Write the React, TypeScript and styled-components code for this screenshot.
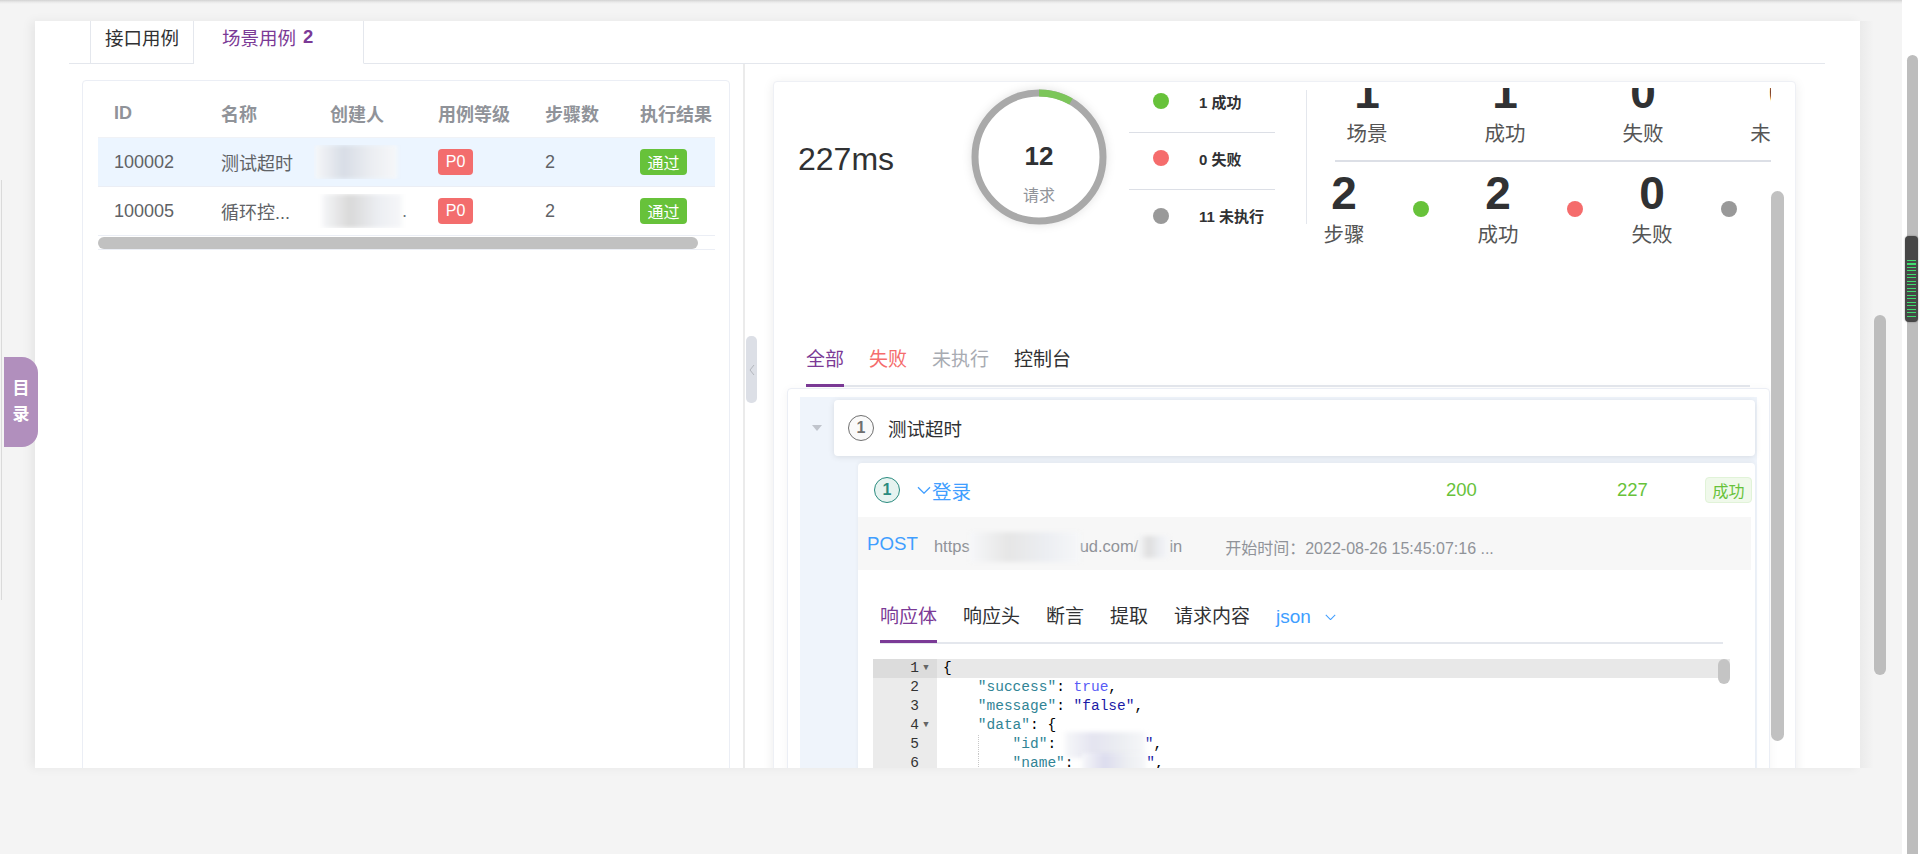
import React from 'react';
import styled, { createGlobalStyle } from 'styled-components';

const FONT = `"Liberation Sans", "Noto Sans CJK SC", sans-serif`;
const MONO = `"Liberation Mono", "DejaVu Sans Mono", monospace`;

const PURPLE = '#7b3a96';
const BLUE = '#409eff';
const GREEN = '#67c23a';
const RED = '#f56c6c';

const GlobalStyle = createGlobalStyle`
  html, body { margin: 0; padding: 0; }
  body { font-family: ${FONT}; background: #f4f4f4; overflow: hidden; }
  * { box-sizing: border-box; }
`;

const Page = styled.div`
  position: relative;
  width: 1920px;
  height: 854px;
  display: flex;
  overflow: hidden;
  background: #f4f4f4;
  font-family: ${FONT};
`;

const MainColumn = styled.div`
  flex: 1;
  min-width: 0;
  display: flex;
  flex-direction: column;
`;

const TopShade = styled.div`
  height: 21px;
  flex-shrink: 0;
  background: linear-gradient(#d2d2d2, #e9e9e9 2px, #f4f4f4 4px);
`;

const Body = styled.div`
  display: flex;
  height: 747px;
  flex-shrink: 0;
`;

const LeftGutter = styled.div`
  width: 35px;
  flex-shrink: 0;
  display: flex;
  flex-direction: column;
`;

const EdgeLine = styled.div`
  width: 1px;
  height: 420px;
  margin: 159px 0 0 1px;
  background: #dadada;
`;

const TocTab = styled.div`
  position: absolute;
  left: 4px;
  top: 357px;
  width: 34px;
  height: 90px;
  border-radius: 0 16px 16px 0;
  background: #b18fbd;
  color: #fff;
  font-size: 17px;
  font-weight: 700;
  display: flex;
  flex-direction: column;
  align-items: center;
  justify-content: center;
  gap: 6px;
  line-height: 20px;
  z-index: 2;
`;

const MainPanel = styled.div`
  width: 1825px;
  flex-shrink: 0;
  background: #fff;
  display: flex;
  flex-direction: column;
  overflow: hidden;
  box-shadow: -4px 0 10px rgba(0, 0, 0, 0.06);
`;

const RightGutter = styled.div`
  flex: 1;
  display: flex;
  padding-left: 14px;
  background: linear-gradient(to right, #ebebeb, #f4f4f4 14px);
`;

const GutterThumb = styled.div`
  width: 12px;
  height: 360px;
  margin-top: 294px;
  border-radius: 6px;
  background: #bdbdbd;
`;

const PageScrollbar = styled.div`
  position: relative;
  width: 18px;
  flex-shrink: 0;
  background: #fff;
  display: flex;
  flex-direction: column;
`;

const PageThumb = styled.div`
  flex: 1;
  margin: 55px 2px 0 5px;
  border-radius: 6px 6px 0 0;
  background: #bdbdbd;
`;

const MiniHandle = styled.div`
  position: absolute;
  left: 3px;
  top: 236px;
  width: 13px;
  height: 86px;
  border-radius: 4px;
  background: #474747;
  box-shadow: 0 0 2px rgba(0, 0, 0, 0.4);
  padding: 24px 2px 3px;
`;

const MiniLines = styled.div`
  height: 100%;
  background: repeating-linear-gradient(to bottom, #3fdc6e 0 1px, transparent 1px 3.5px);
`;

/* ---------- case tabs ---------- */

const CaseTabs = styled.div`
  display: flex;
  height: 43px;
  margin: 0 35px 0 34px;
  padding-left: 21px;
  border-bottom: 1px solid #e4e7ed;
  flex-shrink: 0;
`;

const CaseTab = styled.div<{ $active?: boolean }>`
  display: flex;
  align-items: center;
  height: 43px;
  padding: ${p => (p.$active ? '0 50px 11px 28px' : '0 14px 11px')};
  border-left: ${p => (p.$active ? 'none' : '1px solid #e4e7ed')};
  border-right: 1px solid #e4e7ed;
  border-bottom: 1px solid ${p => (p.$active ? '#fff' : '#e4e7ed')};
  background: #fff;
  font-size: 18.5px;
  color: ${p => (p.$active ? PURPLE : '#303133')};
  white-space: nowrap;
`;

const TabCount = styled.b`
  margin-left: 7px;
  font-size: 18.5px;
`;

const Split = styled.div`
  display: flex;
  flex: 1;
  min-height: 0;
  margin-left: 34px;
`;

/* ---------- left table ---------- */

const LeftPane = styled.div`
  width: 674px;
  flex-shrink: 0;
  padding: 16px 13px 0;
`;

const LeftCard = styled.div`
  height: 720px;
  border: 1px solid #ebeef5;
  border-radius: 4px;
  padding: 8px 14px 0 15px;
`;

const TableViewport = styled.div`
  overflow: hidden;
`;

const TableGrid = styled.div`
  width: 635px;
`;

const COLS = '107px 109px 108px 107px 95px 109px';

const HeaderRow = styled.div`
  display: grid;
  grid-template-columns: ${COLS};
  height: 49px;
  align-items: center;
  border-bottom: 1px solid #f0f2f6;
  font-size: 18px;
  font-weight: 700;
  color: #909399;
`;

const DataRow = styled.div<{ $hl?: boolean }>`
  display: grid;
  grid-template-columns: ${COLS};
  height: 49px;
  align-items: center;
  border-bottom: 1px solid #ebeef5;
  background: ${p => (p.$hl ? '#ecf5ff' : '#fff')};
  font-size: 18px;
  color: #606266;
`;

const Cell = styled.div<{ $pad?: number }>`
  padding-left: ${p => p.$pad ?? 16}px;
  white-space: nowrap;
  overflow: hidden;
  display: flex;
  align-items: center;
`;

const Tag = styled.span<{ $color: string; $w: number }>`
  display: inline-flex;
  align-items: center;
  justify-content: center;
  width: ${p => p.$w}px;
  height: 26px;
  border-radius: 4px;
  background: ${p => p.$color};
  color: #fff;
  font-size: 16px;
`;

const BlurPatch = styled.span<{ $w: number; $h: number; $tone: string }>`
  display: inline-block;
  width: ${p => p.$w}px;
  height: ${p => p.$h}px;
  background: linear-gradient(90deg, #f6f7f9, ${p => p.$tone} 35%, #eceef2 70%, #f6f7f9);
  filter: blur(2px);
  flex-shrink: 0;
`;

const TableScroll = styled.div`
  height: 14px;
  padding-top: 1px;
  border-bottom: 1px solid #ebeef5;
`;

const TableThumb = styled.div`
  width: 600px;
  height: 12px;
  border-radius: 6px;
  background: #c1c1c1;
`;

/* ---------- divider ---------- */

const Divider = styled.div`
  width: 2px;
  flex-shrink: 0;
  background: #ebebeb;
`;

const HandleColumn = styled.div`
  width: 13px;
  flex-shrink: 0;
  padding: 272px 0 0 1px;
`;

const CollapseHandle = styled.div`
  width: 11px;
  height: 67px;
  border-radius: 5px;
  background: #dcdfe6;
  display: flex;
  align-items: center;
  justify-content: center;
`;

/* ---------- right result card ---------- */

const RightPane = styled.div`
  flex: 1;
  min-width: 0;
  padding: 17px 64px 0 15px;
`;

const ResultCard = styled.div`
  display: flex;
  height: 720px;
  background: #fff;
  border: 1px solid #eef0f5;
  border-radius: 4px;
  box-shadow: 0 2px 12px rgba(0, 0, 0, 0.08);
`;

const CardMain = styled.div`
  flex: 1;
  min-width: 0;
  display: flex;
  flex-direction: column;
`;

const CardScroll = styled.div`
  width: 13px;
  margin-right: 11px;
  flex-shrink: 0;
`;

const CardThumb = styled.div`
  height: 550px;
  margin-top: 109px;
  border-radius: 7px;
  background: #c1c1c1;
`;

const SummaryRow = styled.div`
  display: flex;
  align-items: flex-start;
  height: 176px;
  padding-left: 24px;
  flex-shrink: 0;
`;

const TimeValue = styled.div`
  width: 173px;
  margin-top: 57px;
  font-size: 32px;
  line-height: 40px;
  color: #303133;
`;

const DonutWrap = styled.div`
  position: relative;
  width: 136px;
  height: 136px;
  margin-top: 7px;
  flex-shrink: 0;
`;

const DonutSvg = styled.svg`
  position: absolute;
  inset: 0;
  filter: drop-shadow(0 0 5px rgba(0, 0, 0, 0.12));
`;

const DonutLabel = styled.div`
  position: relative;
  display: flex;
  flex-direction: column;
  align-items: center;
  padding-top: 52px;
`;

const DonutCount = styled.div`
  font-size: 26px;
  line-height: 30px;
  font-weight: 700;
  color: #303133;
`;

const DonutCaption = styled.div`
  margin-top: 14px;
  font-size: 16px;
  line-height: 22px;
  color: #909399;
`;

const Legend = styled.div`
  width: 146px;
  margin: -6px 0 0 22px;
  flex-shrink: 0;
`;

const LegendRow = styled.div`
  display: flex;
  align-items: center;
  height: 57px;
  padding: 15px 0 21px 24px;
  border-bottom: 1px solid #dcdfe6;

  &:last-child {
    border-bottom: none;
  }
`;

const Dot = styled.span<{ $color: string }>`
  display: inline-block;
  width: 16px;
  height: 16px;
  border-radius: 50%;
  background: ${p => p.$color};
  flex-shrink: 0;
`;

const LegendText = styled.span`
  margin-left: 30px;
  font-size: 15px;
  font-weight: 700;
  color: #303133;
  white-space: nowrap;
`;

const VSeparator = styled.div`
  width: 1px;
  height: 134px;
  margin: 8px 0 0 31px;
  background: #e4e7ed;
  flex-shrink: 0;
`;

const StatsViewport = styled.div`
  flex: 1;
  min-width: 0;
  height: 163px;
  margin-top: 6px;
  overflow: hidden;
`;

const StatsInner = styled.div`
  margin-top: -21px;
  width: 700px;
`;

const StatsTopRow = styled.div`
  display: flex;
  gap: 18px;
`;

const StatCol = styled.div<{ $w: number }>`
  width: ${p => p.$w}px;
  flex-shrink: 0;
  display: flex;
  flex-direction: column;
  align-items: center;
`;

const StatNumber = styled.div`
  font-size: 46px;
  line-height: 50px;
  font-weight: 700;
  color: #303133;
`;

const StatLabel = styled.div`
  margin-top: 3px;
  font-size: 20.5px;
  line-height: 28px;
  color: #555;
  white-space: nowrap;
`;

const StatsRule = styled.div`
  height: 2px;
  margin: 12px 0 0 28px;
  background: #dcdfe6;
`;

const StatsBottomRow = styled.div`
  display: flex;
  margin-top: 6px;
`;

const DotCol = styled.div`
  width: 80px;
  flex-shrink: 0;
  display: flex;
  align-items: center;
  justify-content: center;
`;

const TabsBar = styled.div`
  display: flex;
  gap: 25px;
  margin: 89px 21px 0 32px;
  border-bottom: 2px solid #e4e7ed;
  flex-shrink: 0;
`;

const TabItem = styled.div<{ $color: string; $active?: boolean }>`
  font-size: 19px;
  line-height: 26px;
  padding-bottom: ${p => (p.$active ? '10px' : '12px')};
  color: ${p => p.$color};
  border-bottom: ${p => (p.$active ? `3px solid ${PURPLE}` : 'none')};
  margin-bottom: ${p => (p.$active ? '-2px' : '0')};
  white-space: nowrap;
`;

const ResultBox = styled.div`
  flex: 1;
  display: flex;
  flex-direction: column;
  margin: 1px 1px 0 13px;
  padding: 8px 12px 0;
  border: 1px solid #ebeef5;
  border-radius: 4px;
  box-shadow: 0 2px 10px rgba(0, 0, 0, 0.05);
`;

const TreeArea = styled.div`
  flex: 1;
  display: flex;
  flex-direction: column;
  background: #eff4fb;
`;

const NodeRow = styled.div`
  display: flex;
  padding: 3px 2px 3px 0;
`;

const CaretCol = styled.div`
  width: 34px;
  display: flex;
  align-items: center;
  justify-content: center;
`;

const NodeCard = styled.div`
  flex: 1;
  height: 56px;
  display: flex;
  align-items: center;
  padding-left: 14px;
  background: #fff;
  border-radius: 4px;
  box-shadow: 0 1px 6px rgba(0, 0, 0, 0.1);
`;

const IndexCircle = styled.span<{ $color: string; $bg: string }>`
  display: inline-flex;
  align-items: center;
  justify-content: center;
  width: 26px;
  height: 26px;
  border-radius: 50%;
  border: 1.5px solid ${p => p.$color};
  background: ${p => p.$bg};
  color: ${p => p.$color};
  font-size: 16px;
  font-weight: 700;
  flex-shrink: 0;
`;

const NodeName = styled.span`
  margin-left: 14px;
  font-size: 18.5px;
  color: #303133;
`;

const Children = styled.div`
  flex: 1;
  display: flex;
  flex-direction: column;
  padding: 4px 2px 0 58px;
`;

const StepCard = styled.div`
  flex: 1;
  display: flex;
  flex-direction: column;
  background: #fff;
  border-radius: 4px 4px 0 0;
  box-shadow: 0 -1px 4px rgba(0, 0, 0, 0.05);
`;

const StepHeader = styled.div`
  display: flex;
  align-items: center;
  height: 54px;
  padding: 0 3px 0 16px;
`;

const StepName = styled.div`
  flex: 1;
  display: flex;
  align-items: center;
  gap: 1px;
  margin-left: 17px;
  font-size: 19.5px;
  color: ${BLUE};
`;

const StepMetric = styled.div<{ $w: number }>`
  width: ${p => p.$w}px;
  font-size: 18.5px;
  color: ${GREEN};
`;

const StatusTag = styled.span`
  display: inline-flex;
  align-items: center;
  justify-content: center;
  width: 47px;
  height: 26px;
  border-radius: 4px;
  background: #f0f9eb;
  border: 1px solid #e1f3d8;
  color: ${GREEN};
  font-size: 16px;
`;

const RequestRow = styled.div`
  display: flex;
  align-items: center;
  height: 53px;
  margin-right: 4px;
  padding-left: 9px;
  background: #f7f7f7;
`;

const Method = styled.span`
  font-size: 18.7px;
  color: ${BLUE};
`;

const UrlText = styled.span`
  display: flex;
  align-items: center;
  margin: 6px 0 0 16px;
  font-size: 16.5px;
  color: #909399;
  white-space: nowrap;
`;

const StartTime = styled.span`
  margin: 6px 0 0 43px;
  font-size: 16px;
  color: #909399;
  white-space: nowrap;
`;

const ResponseTabs = styled.div`
  display: flex;
  align-items: flex-start;
  gap: 26px;
  margin: 34px 32px 0 22px;
  border-bottom: 2px solid #e4e7ed;
`;

const DropTab = styled.div`
  display: flex;
  align-items: center;
  gap: 14px;
  height: 26px;
  font-size: 19px;
  color: ${BLUE};
`;

const Editor = styled.div`
  position: relative;
  flex: 1;
  margin: 15px 25px 0 15px;
  overflow: hidden;
  font-family: ${MONO};
  font-size: 14.5px;
  line-height: 19px;
  color: #000;
`;

const EditorLine = styled.div<{ $active?: boolean }>`
  display: flex;
  height: 19px;
  background: ${p => (p.$active ? '#e8e8e8' : '#fff')};
`;

const GutterCell = styled.div<{ $active?: boolean }>`
  width: 64px;
  flex-shrink: 0;
  display: flex;
  justify-content: flex-end;
  padding-right: 4px;
  background: ${p => (p.$active ? '#dcdcdc' : '#ebebeb')};
  color: #333;
`;

const FoldMark = styled.span`
  width: 14px;
  text-align: center;
  font-size: 9px;
  color: #666;
`;

const CodeCell = styled.div`
  padding-left: 6px;
  white-space: pre;
  display: flex;
  align-items: center;
`;

const Indent = styled.span<{ $guide?: boolean }>`
  display: inline-block;
  width: 34.8px;
  height: 19px;
  flex-shrink: 0;
  border-left: ${p => (p.$guide ? '1px dotted #c8c8c8' : 'none')};
`;

const Key = styled.span`
  color: #318495;
`;

const Bool = styled.span`
  color: #585cf6;
`;

const Str = styled.span`
  color: #1a1aa6;
`;

const EditorThumb = styled.div`
  position: absolute;
  top: 0;
  right: 0;
  width: 12px;
  height: 25px;
  border-radius: 6px;
  background: #c4c4c4;
`;

const Chevron: React.FC<{ color: string; w?: number }> = ({ color, w = 14 }) => (
  <svg width={w} height={w * 0.6} viewBox="0 0 14 8" fill="none">
    <polyline points="1,1 7,7 13,1" stroke={color} strokeWidth="1.3" />
  </svg>
);

const rows = [
  { id: '100002', name: '测试超时', hl: true, tone: '#d8dde6', dot: false },
  { id: '100005', name: '循环控...', hl: false, tone: '#d9d9d9', dot: true },
];

const App: React.FC = () => {
  return (
    <Page>
      <GlobalStyle />
      <MainColumn>
        <TopShade />
        <Body>
          <LeftGutter>
            <EdgeLine />
          </LeftGutter>
          <MainPanel>
            <CaseTabs>
              <CaseTab>接口用例</CaseTab>
              <CaseTab $active>
                场景用例<TabCount>2</TabCount>
              </CaseTab>
            </CaseTabs>
            <Split>
              <LeftPane>
                <LeftCard>
                  <TableViewport>
                    <TableGrid>
                      <HeaderRow>
                        <Cell>ID</Cell>
                        <Cell>名称</Cell>
                        <Cell>创建人</Cell>
                        <Cell>用例等级</Cell>
                        <Cell>步骤数</Cell>
                        <Cell>执行结果</Cell>
                      </HeaderRow>
                      {rows.map(r => (
                        <DataRow key={r.id} $hl={r.hl}>
                          <Cell>{r.id}</Cell>
                          <Cell>{r.name}</Cell>
                          <Cell $pad={r.dot ? 8 : 1}>
                            <BlurPatch $w={r.dot ? 80 : 82} $h={34} $tone={r.tone} />
                            {r.dot ? '.' : ''}
                          </Cell>
                          <Cell>
                            <Tag $color="#f36d6d" $w={35}>P0</Tag>
                          </Cell>
                          <Cell>2</Cell>
                          <Cell>
                            <Tag $color={GREEN} $w={47}>通过</Tag>
                          </Cell>
                        </DataRow>
                      ))}
                    </TableGrid>
                  </TableViewport>
                  <TableScroll>
                    <TableThumb />
                  </TableScroll>
                </LeftCard>
              </LeftPane>
              <Divider />
              <HandleColumn>
                <CollapseHandle>
                  <svg width="6" height="12" viewBox="0 0 6 12" fill="none">
                    <polyline points="5,1 1,6 5,11" stroke="#b4b7bd" strokeWidth="1" />
                  </svg>
                </CollapseHandle>
              </HandleColumn>
              <RightPane>
                <ResultCard>
                  <CardMain>
                    <SummaryRow>
                      <TimeValue>227ms</TimeValue>
                      <DonutWrap>
                        <DonutSvg width="136" height="136" viewBox="0 0 136 136">
                          <circle cx="68" cy="68" r="64" fill="#fff" stroke="#a9a9a9" strokeWidth="7" />
                          <path d="M68 4 A64 64 0 0 1 100 12.57" fill="none" stroke="#7cc65a" strokeWidth="7" />
                        </DonutSvg>
                        <DonutLabel>
                          <DonutCount>12</DonutCount>
                          <DonutCaption>请求</DonutCaption>
                        </DonutLabel>
                      </DonutWrap>
                      <Legend>
                        <LegendRow>
                          <Dot $color={GREEN} />
                          <LegendText>1 成功</LegendText>
                        </LegendRow>
                        <LegendRow>
                          <Dot $color={RED} />
                          <LegendText>0 失败</LegendText>
                        </LegendRow>
                        <LegendRow>
                          <Dot $color="#999" />
                          <LegendText>11 未执行</LegendText>
                        </LegendRow>
                      </Legend>
                      <VSeparator />
                      <StatsViewport>
                        <StatsInner>
                          <StatsTopRow>
                            {[
                              ['1', '场景'],
                              ['1', '成功'],
                              ['0', '失败'],
                              ['0', '未执行'],
                            ].map(([n, l]) => (
                              <StatCol key={l} $w={120}>
                                <StatNumber>{n}</StatNumber>
                                <StatLabel>{l}</StatLabel>
                              </StatCol>
                            ))}
                          </StatsTopRow>
                          <StatsRule />
                          <StatsBottomRow>
                            {[
                              ['2', '步骤', GREEN],
                              ['2', '成功', RED],
                              ['0', '失败', '#999'],
                              ['0', '未执行', ''],
                            ].map(([n, l, c]) => (
                              <React.Fragment key={l}>
                                <StatCol $w={74}>
                                  <StatNumber>{n}</StatNumber>
                                  <StatLabel>{l}</StatLabel>
                                </StatCol>
                                {c && (
                                  <DotCol>
                                    <Dot $color={c} />
                                  </DotCol>
                                )}
                              </React.Fragment>
                            ))}
                          </StatsBottomRow>
                        </StatsInner>
                      </StatsViewport>
                    </SummaryRow>

                    <TabsBar>
                      <TabItem $color={PURPLE} $active>全部</TabItem>
                      <TabItem $color={RED}>失败</TabItem>
                      <TabItem $color="#a8abb2">未执行</TabItem>
                      <TabItem $color="#303133">控制台</TabItem>
                    </TabsBar>

                    <ResultBox>
                      <TreeArea>
                        <NodeRow>
                          <CaretCol>
                            <svg width="10" height="6" viewBox="0 0 10 6">
                              <polygon points="0,0 10,0 5,6" fill="#c0c4cc" />
                            </svg>
                          </CaretCol>
                          <NodeCard>
                            <IndexCircle $color="#707070" $bg="#fafafa">1</IndexCircle>
                            <NodeName>测试超时</NodeName>
                          </NodeCard>
                        </NodeRow>
                        <Children>
                          <StepCard>
                            <StepHeader>
                              <IndexCircle $color="#2a8b7f" $bg="#e6f3f0">1</IndexCircle>
                              <StepName>
                                <Chevron color={BLUE} />
                                登录
                              </StepName>
                              <StepMetric $w={171}>200</StepMetric>
                              <StepMetric $w={88}>227</StepMetric>
                              <StatusTag>成功</StatusTag>
                            </StepHeader>
                            <RequestRow>
                              <Method>POST</Method>
                              <UrlText>
                                https
                                <BlurPatch $w={110} $h={30} $tone="#e6e6e6" />
                                ud.com/
                                <BlurPatch $w={31} $h={22} $tone="#dedede" />
                                in
                              </UrlText>
                              <StartTime>开始时间：2022-08-26 15:45:07:16 ...</StartTime>
                            </RequestRow>
                            <ResponseTabs>
                              <TabItem $color={PURPLE} $active>响应体</TabItem>
                              <TabItem $color="#303133">响应头</TabItem>
                              <TabItem $color="#303133">断言</TabItem>
                              <TabItem $color="#303133">提取</TabItem>
                              <TabItem $color="#303133">请求内容</TabItem>
                              <DropTab>
                                json
                                <Chevron color={BLUE} w={11} />
                              </DropTab>
                            </ResponseTabs>
                            <Editor>
                              <EditorLine $active>
                                <GutterCell $active>
                                  1<FoldMark>▼</FoldMark>
                                </GutterCell>
                                <CodeCell>{'{'}</CodeCell>
                              </EditorLine>
                              <EditorLine>
                                <GutterCell>
                                  2<FoldMark />
                                </GutterCell>
                                <CodeCell>
                                  <Indent />
                                  <Key>"success"</Key>: <Bool>true</Bool>,
                                </CodeCell>
                              </EditorLine>
                              <EditorLine>
                                <GutterCell>
                                  3<FoldMark />
                                </GutterCell>
                                <CodeCell>
                                  <Indent />
                                  <Key>"message"</Key>: <Str>"false"</Str>,
                                </CodeCell>
                              </EditorLine>
                              <EditorLine>
                                <GutterCell>
                                  4<FoldMark>▼</FoldMark>
                                </GutterCell>
                                <CodeCell>
                                  <Indent />
                                  <Key>"data"</Key>: {'{'}
                                </CodeCell>
                              </EditorLine>
                              <EditorLine>
                                <GutterCell>
                                  5<FoldMark />
                                </GutterCell>
                                <CodeCell>
                                  <Indent />
                                  <Indent $guide />
                                  <Key>"id"</Key>:{' '}
                                  <BlurPatch $w={80} $h={26} $tone="#e4e4f0" />
                                  <Str>"</Str>,
                                </CodeCell>
                              </EditorLine>
                              <EditorLine>
                                <GutterCell>
                                  6<FoldMark />
                                </GutterCell>
                                <CodeCell>
                                  <Indent />
                                  <Indent $guide />
                                  <Key>"name"</Key>:{' '}
                                  <BlurPatch $w={64} $h={22} $tone="#dcdcee" />
                                  <Str>"</Str>,
                                </CodeCell>
                              </EditorLine>
                              <EditorLine>
                                <GutterCell>
                                  7<FoldMark />
                                </GutterCell>
                                <CodeCell />
                              </EditorLine>
                              <EditorThumb />
                            </Editor>
                          </StepCard>
                        </Children>
                      </TreeArea>
                    </ResultBox>
                  </CardMain>
                  <CardScroll>
                    <CardThumb />
                  </CardScroll>
                </ResultCard>
              </RightPane>
            </Split>
          </MainPanel>
          <RightGutter>
            <GutterThumb />
          </RightGutter>
        </Body>
      </MainColumn>
      <PageScrollbar>
        <PageThumb />
        <MiniHandle>
          <MiniLines />
        </MiniHandle>
      </PageScrollbar>
      <TocTab>
        <span>目</span>
        <span>录</span>
      </TocTab>
    </Page>
  );
};

export default App;
